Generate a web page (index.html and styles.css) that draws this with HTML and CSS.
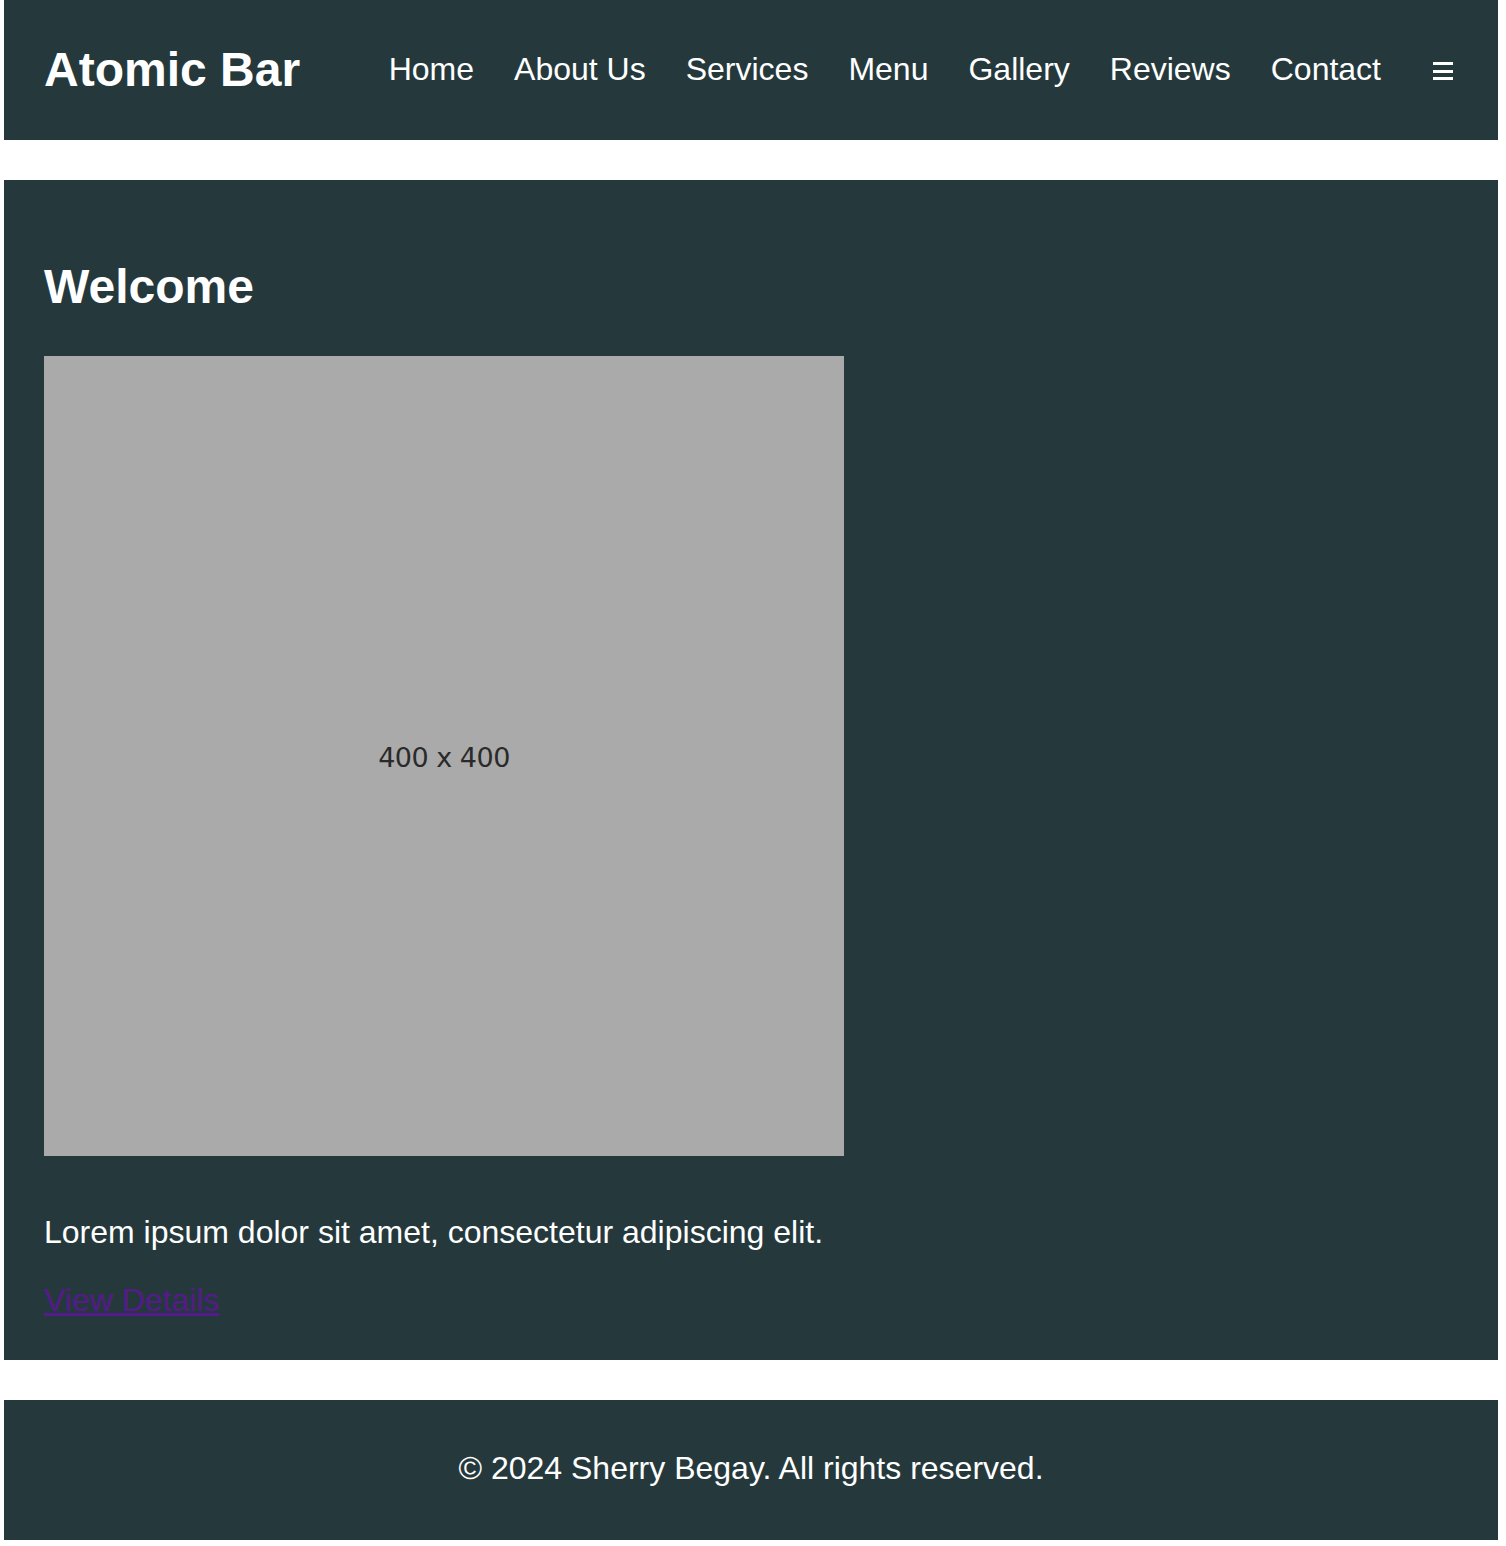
FILE: index.html
```html
<!DOCTYPE html>
<html lang="en">
<head>
<meta charset="utf-8">
<title>Atomic Bar</title>
<link rel="stylesheet" href="styles.css">
</head>
<body>
<header class="site-header">
  <div class="logo">Atomic Bar</div>
  <nav class="nav">
    <a href="#">Home</a>
    <a href="#">About Us</a>
    <a href="#">Services</a>
    <a href="#">Menu</a>
    <a href="#">Gallery</a>
    <a href="#">Reviews</a>
    <a href="#">Contact</a>
  </nav>
  <div class="burger" aria-label="Menu"><span></span><span></span><span></span></div>
</header>
<main class="hero">
  <h2 class="hero-title">Welcome</h2>
  <div class="placeholder"><span>400 x 400</span></div>
  <p class="hero-text">Lorem ipsum dolor sit amet, consectetur adipiscing elit.</p>
  <a class="hero-link" href="#">View Details</a>
</main>
<footer class="site-footer">
  <p>© 2024 Sherry Begay. All rights reserved.</p>
</footer>
</body>
</html>
```
FILE: styles.css
```css
html, body {
  background: #ffffff;
}
body {
  margin: 0;
  padding: 0 8px 6px 4px;
  font-family: "Liberation Sans", Arial, sans-serif;
  color: #ffffff;
}
.site-header {
  background: #25393d;
  height: 140px;
  box-sizing: border-box;
  padding: 0 40px;
  display: flex;
  align-items: center;
}
.logo {
  font-size: 48px;
  font-weight: bold;
  line-height: 55px;
  padding-bottom: 2px;
}
.nav {
  margin-left: auto;
  display: flex;
  gap: 40px;
  padding-bottom: 2px;
}
.nav a {
  color: #ffffff;
  text-decoration: none;
  font-size: 32px;
  line-height: 37px;
}
.burger {
  margin-left: 52px;
  margin-right: 5px;
  width: 20px;
  display: flex;
  flex-direction: column;
  gap: 4.5px;
  padding-top: 2px;
}
.burger span {
  display: block;
  height: 3px;
  background: #ffffff;
}
.hero {
  display: block;
  background: #25393d;
  margin-top: 40px;
  padding: 40px 40px 41px;
}
.hero-title {
  font-size: 48px;
  font-weight: bold;
  line-height: 55px;
  margin: 39px 0 42px;
}
.placeholder {
  width: 800px;
  height: 800px;
  background: #aaaaaa;
  display: flex;
  align-items: center;
  justify-content: center;
}
.placeholder span {
  color: #2a2a2a;
  font-family: "DejaVu Sans", "Liberation Sans", sans-serif;
  font-size: 27px;
  letter-spacing: -0.5px;
  padding-top: 2px;
}
.hero-text {
  font-size: 32px;
  line-height: 37px;
  margin: 58px 0 31px;
}
.hero-link {
  display: block;
  width: max-content;
  font-size: 32px;
  line-height: 37px;
  color: #551a8b;
}
.site-footer {
  background: #25393d;
  margin-top: 40px;
  height: 140px;
  display: flex;
  align-items: center;
  justify-content: center;
}
.site-footer p {
  margin: 0;
  font-size: 32px;
  line-height: 37px;
  padding-bottom: 3px;
}
```
